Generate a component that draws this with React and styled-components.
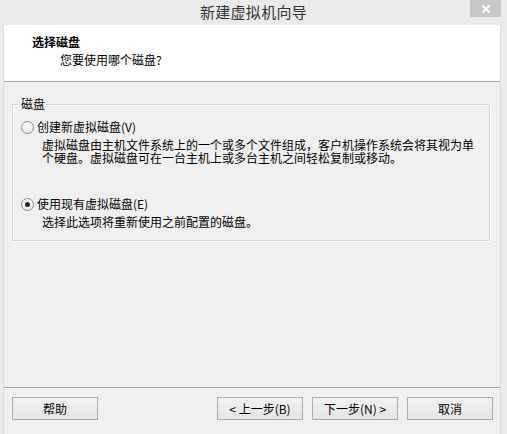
import React, { useState } from 'react';
import styled, { createGlobalStyle } from 'styled-components';

const GlobalStyle = createGlobalStyle`
    html, body {
        margin: 0;
        padding: 0;
        background: #ebebeb;
    }
    body {
        font-family: 'Noto Sans CJK SC', 'Noto Sans', sans-serif;
        font-size: 12px;
        color: #000;
    }
`;

const Window = styled.div`
    width: 507px;
    height: 434px;
    display: flex;
    flex-direction: column;
    background: #ebebeb;
    box-sizing: border-box;
`;

const TitleBar = styled.div`
    height: 25px;
    display: grid;
    grid-template-columns: 1fr auto 1fr;
    align-items: start;
    flex-shrink: 0;
`;

const Title = styled.div`
    grid-column: 2;
    font-size: 15px;
    line-height: 23px;
    color: #333;
    letter-spacing: 0.3px;
`;

const CloseButton = styled.button`
    grid-column: 3;
    justify-self: end;
    width: 31px;
    height: 17px;
    margin-right: 6px;
    padding: 0;
    border: none;
    background: #c7c7c7;
    display: flex;
    align-items: center;
    justify-content: center;
`;

const Client = styled.div`
    flex: 1;
    display: flex;
    flex-direction: column;
    margin: 0 6px 0 3px;
    border-left: 1px solid #dcdcdc;
    border-right: 1px solid #dcdcdc;
    background: #f0f0f0;
`;

const Header = styled.div`
    height: 57px;
    background: #fff;
    border-bottom: 1px solid #a0a0a0;
    box-sizing: border-box;
    padding: 8px 0 0 28px;
    flex-shrink: 0;
`;

const HeaderTitle = styled.div`
    font-weight: bold;
    line-height: 18px;
`;

const HeaderSub = styled.div`
    line-height: 18px;
    padding-left: 28px;
`;

const Body = styled.div`
    flex: 1;
    padding: 15px 10px 0 8px;
`;

const Group = styled.fieldset`
    margin: 0;
    height: 144px;
    box-sizing: border-box;
    border: 1px solid #d5d5d5;
    box-shadow: inset 1px 1px 0 #fff, 1px 1px 0 #fff;
    padding: 0 8px 0 8px;
`;

const Legend = styled.legend`
    padding: 0 1px;
    margin-left: -1px;
    line-height: 14px;
`;

const Option = styled.label`
    display: block;
    margin-top: ${({ $top }) => $top}px;
`;

const OptionRow = styled.div`
    display: flex;
    align-items: center;
    gap: 3px;
    line-height: 16px;
`;

const Radio = styled.span`
    width: 11px;
    height: 11px;
    border-radius: 50%;
    border: 1px solid #8a8a8a;
    background: linear-gradient(#fdfdfd, #e9e9e9);
    display: inline-flex;
    align-items: center;
    justify-content: center;
    flex-shrink: 0;

    &::after {
        content: '';
        width: 5px;
        height: 5px;
        border-radius: 50%;
        background: ${({ $checked }) => ($checked ? '#222' : 'transparent')};
    }
`;

const Description = styled.div`
    padding-left: 21px;
    line-height: 13px;
    margin-top: 3px;
    white-space: pre-line;
`;

const Footer = styled.div`
    height: 47px;
    border-top: 1px solid #a0a0a0;
    box-shadow: inset 0 1px 0 #fff;
    display: flex;
    align-items: flex-start;
    padding: 9px 7px 0 8px;
    box-sizing: border-box;
    flex-shrink: 0;
`;

const Button = styled.button`
    width: 86px;
    height: 23px;
    margin-left: ${({ $gap }) => $gap || 0}px;
    border: 1px solid #acacac;
    background: linear-gradient(#f2f2f2, #e5e5e5);
    font-family: inherit;
    font-size: 12px;
    color: #000;
    padding: 0;
    line-height: 20px;
`;

const Spacer = styled.div`
    flex: 1;
`;

export default () => {
    const [choice, setChoice] = useState('existing');

    return (
        <Window>
            <GlobalStyle />
            <TitleBar>
                <Title>新建虚拟机向导</Title>
                <CloseButton>
                    <svg width="10" height="10" viewBox="0 0 10 10">
                        <path d="M1.5 1.5 L8.5 8.5 M8.5 1.5 L1.5 8.5" stroke="#fff" strokeWidth="2" />
                    </svg>
                </CloseButton>
            </TitleBar>
            <Client>
                <Header>
                    <HeaderTitle>选择磁盘</HeaderTitle>
                    <HeaderSub>您要使用哪个磁盘?</HeaderSub>
                </Header>
                <Body>
                    <Group>
                        <Legend>磁盘</Legend>
                        <Option $top={8} onClick={() => setChoice('new')}>
                            <OptionRow>
                                <Radio $checked={choice === 'new'} />
                                创建新虚拟磁盘(V)
                            </OptionRow>
                            <Description>
                                {'虚拟磁盘由主机文件系统上的一个或多个文件组成，客户机操作系统会将其视为单\n个硬盘。虚拟磁盘可在一台主机上或多台主机之间轻松复制或移动。'}
                            </Description>
                        </Option>
                        <Option $top={32} onClick={() => setChoice('existing')}>
                            <OptionRow>
                                <Radio $checked={choice === 'existing'} />
                                使用现有虚拟磁盘(E)
                            </OptionRow>
                            <Description>选择此选项将重新使用之前配置的磁盘。</Description>
                        </Option>
                    </Group>
                </Body>
                <Footer>
                    <Button>帮助</Button>
                    <Spacer />
                    <Button>&lt; 上一步(B)</Button>
                    <Button $gap={9}>下一步(N) &gt;</Button>
                    <Button $gap={9}>取消</Button>
                </Footer>
            </Client>
        </Window>
    );
};
